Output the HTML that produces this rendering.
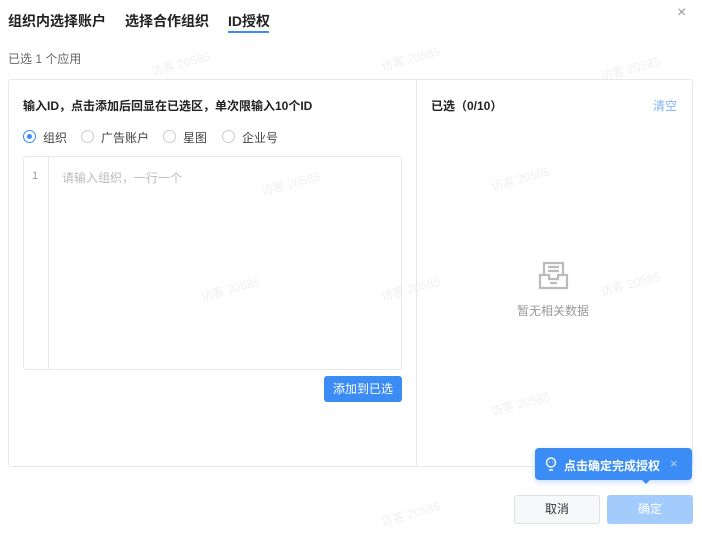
<!DOCTYPE html>
<html><head><meta charset="utf-8"><style>
*{box-sizing:border-box;margin:0;padding:0}
body{width:702px;height:535px;background:#fff;font-family:"Liberation Sans","Noto Sans CJK SC",sans-serif;position:relative;overflow:hidden;color:#333}
.a{position:absolute;white-space:nowrap}
.tab{font-size:14px;font-weight:bold;color:#222;top:11px}
.radio{width:13px;height:13px;border:1px solid #ccc;border-radius:50%;position:absolute;top:130px}
.w{position:absolute;white-space:nowrap;font-size:12px;color:#f0f0f0;transform:rotate(-15deg)}
</style></head><body>
<div class="w" style="left:150px;top:55px">访客 20585</div>
<div class="w" style="left:380px;top:50px">访客 20585</div>
<div class="w" style="left:600px;top:60px">访客 20585</div>
<div class="w" style="left:260px;top:175px">访客 20585</div>
<div class="w" style="left:490px;top:170px">访客 20585</div>
<div class="w" style="left:200px;top:280px">访客 20585</div>
<div class="w" style="left:380px;top:280px">访客 20585</div>
<div class="w" style="left:600px;top:275px">访客 20585</div>
<div class="w" style="left:490px;top:395px">访客 20585</div>
<div class="w" style="left:380px;top:505px">访客 20585</div>
<div class="a tab" style="left:8px">组织内选择账户</div>
<div class="a tab" style="left:125px">选择合作组织</div>
<div class="a tab" style="left:228px">ID授权</div>
<div class="a" style="left:228px;top:31px;width:41px;height:2px;background:#3b8cf5"></div>
<div class="a" style="left:677px;top:4px;font-size:16px;color:#999">×</div>
<div class="a" style="left:8px;top:50px;font-size:12px;color:#666">已选 1 个应用</div>
<div class="a" style="left:8px;top:79px;width:685px;height:388px;border:1px solid #e6e8ec;border-radius:3px"></div>
<div class="a" style="left:416px;top:80px;width:1px;height:386px;background:#e6e8ec"></div>
<div class="a" style="left:23px;top:97px;font-size:12px;font-weight:bold;color:#222">输入ID，点击添加后回显在已选区，单次限输入10个ID</div>
<div class="radio" style="left:23px;border:1px solid #3b8cf5"><div style="position:absolute;left:3px;top:3px;width:5px;height:5px;border-radius:50%;background:#3b8cf5"></div></div>
<div class="a" style="left:43px;top:129px;font-size:12px;color:#444">组织</div>
<div class="radio" style="left:81px"></div>
<div class="a" style="left:101px;top:129px;font-size:12px;color:#444">广告账户</div>
<div class="radio" style="left:163px"></div>
<div class="a" style="left:183px;top:129px;font-size:12px;color:#444">星图</div>
<div class="radio" style="left:222px"></div>
<div class="a" style="left:242px;top:129px;font-size:12px;color:#444">企业号</div>
<div class="a" style="left:23px;top:156px;width:379px;height:214px;border:1px solid #e6e8ec;border-radius:3px"></div>
<div class="a" style="left:48px;top:157px;width:1px;height:212px;background:#e6e8ec"></div>
<div class="a" style="left:32px;top:170px;font-size:11px;color:#999">1</div>
<div class="a" style="left:62px;top:169px;font-size:12px;color:#bbb">请输入组织，一行一个</div>
<div class="a" style="left:324px;top:376px;width:78px;height:26px;background:#3b8cf5;border-radius:3px;color:#fff;font-size:12px;text-align:center;line-height:26px">添加到已选</div>
<div class="a" style="left:431px;top:97px;font-size:12px;font-weight:bold;color:#222">已选（0/10）</div>
<div class="a" style="left:653px;top:97px;font-size:12px;color:#7fb5f8">清空</div>
<svg class="a" style="left:537px;top:260px" width="33" height="32" viewBox="0 0 33 32" fill="none" stroke="#bbb" stroke-width="2.2"><path d="M7 14V3h19v11"/><path d="M11 7h11M11 11h11"/><path d="M3 15h9v4h9v-4h9v13H3z"/><path d="M13 23h7"/></svg>
<div class="a" style="left:517px;top:302px;font-size:12px;color:#999">暂无相关数据</div>
<div class="a" style="left:535px;top:448px;width:157px;height:32px;background:#3b8cf5;border-radius:4px;box-shadow:0 2px 6px rgba(59,140,245,.3)"></div>
<div class="a" style="left:641px;top:479px;width:0;height:0;border-left:5px solid transparent;border-right:5px solid transparent;border-top:5px solid #3b8cf5"></div>
<svg class="a" style="left:545px;top:457px" width="12" height="14" viewBox="0 0 12 14" fill="none" stroke="#fff" stroke-width="1.4"><circle cx="6" cy="5.5" r="4.5"/><path d="M4 13h4M4.5 5h0.5M7 5h0.5"/></svg>
<div class="a" style="left:564px;top:457px;font-size:12px;font-weight:bold;color:#fff">点击确定完成授权</div>
<div class="a" style="left:670px;top:456px;font-size:13px;color:#bcd6fb">×</div>
<div class="a" style="left:514px;top:495px;width:86px;height:29px;border:1px solid #dde0e5;border-radius:3px;background:#f7f8fa;font-size:12px;text-align:center;line-height:27px;color:#333">取消</div>
<div class="a" style="left:607px;top:495px;width:86px;height:29px;border-radius:3px;background:#a3cbfb;font-size:12px;text-align:center;line-height:29px;color:#fff">确定</div>
</body></html>
